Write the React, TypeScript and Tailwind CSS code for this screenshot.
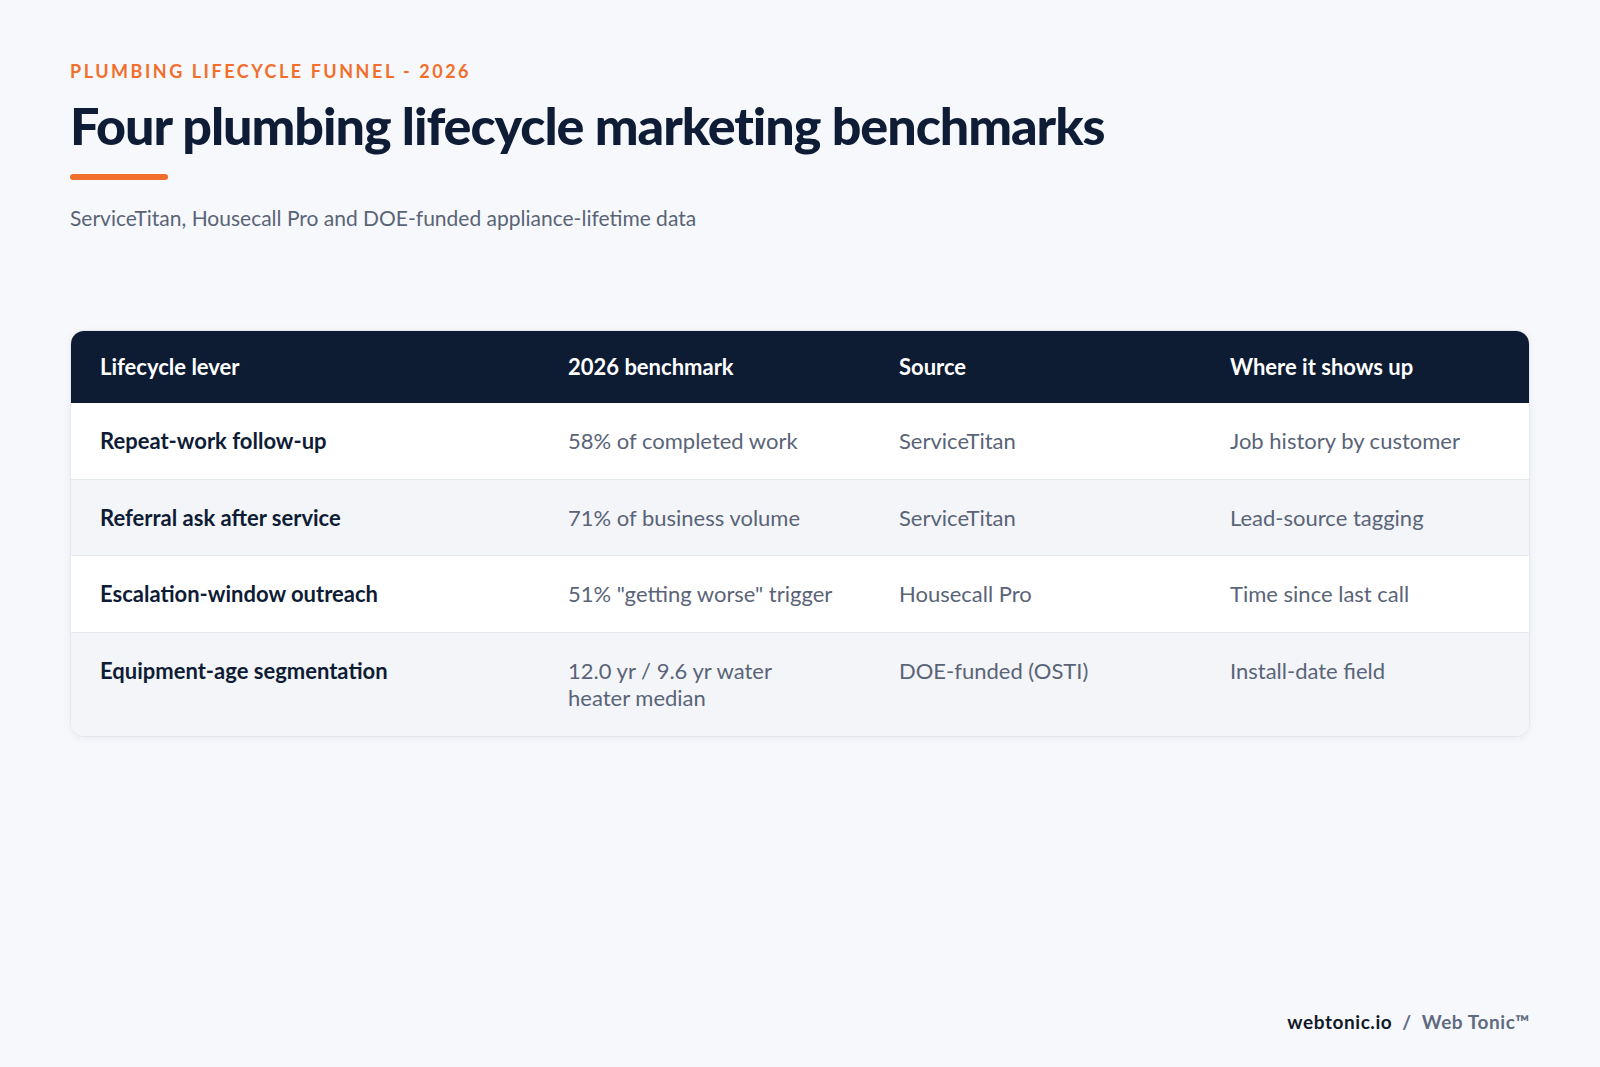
import React from "react";

const rows = [
  { lever: "Repeat-work follow-up", bench: <>58% of completed work</>, source: "ServiceTitan", where: "Job history by customer" },
  { lever: "Referral ask after service", bench: <>71% of business volume</>, source: "ServiceTitan", where: "Lead-source tagging" },
  { lever: "Escalation-window outreach", bench: <>51% "getting worse" trigger</>, source: "Housecall Pro", where: "Time since last call" },
  { lever: "Equipment-age segmentation", bench: <>12.0 yr / 9.6 yr water<br />heater median</>, source: "DOE-funded (OSTI)", where: "Install-date field" },
];

export default function App() {
  return (
    <div
      className="min-h-[1067px] w-full bg-[#f6f8fb] px-[70px] pt-[58px] flex flex-col"
      style={{ fontFamily: "Lato, 'Open Sans', sans-serif" }}
    >
      <div className="text-[18px] font-bold uppercase tracking-[0.14em] text-[#f26e2d] leading-[26px]">
        Plumbing Lifecycle Funnel - 2026
      </div>
      <h1 className="mt-[10px] text-[52px] font-black leading-[62px] tracking-[-0.02em] text-[#0f1c35]">
        Four plumbing lifecycle marketing benchmarks
      </h1>
      <div className="mt-[18px] h-[6px] w-[98px] rounded-full bg-[#f26e2d]" />
      <p className="mt-[24px] text-[21px] leading-[28px] text-[#5a6477]">
        ServiceTitan, Housecall Pro and DOE-funded appliance-lifetime data
      </p>

      <div className="mt-[98px] overflow-hidden rounded-[14px] border border-[#e3e7ee] bg-white shadow-[0_2px_8px_rgba(15,28,53,0.05)]">
        <div className="grid grid-cols-[497px_331px_331px_1fr] bg-[#0d1b33] text-[22px] font-bold leading-[28px] text-white">
          <div className="py-[22px] pl-[29px]">Lifecycle lever</div>
          <div className="py-[22px]">2026 benchmark</div>
          <div className="py-[22px]">Source</div>
          <div className="py-[22px]">Where it shows up</div>
        </div>
        {rows.map((r, i) => (
          <div
            key={i}
            className={
              "grid grid-cols-[497px_331px_331px_1fr] text-[22px] leading-[27.5px] " +
              (i % 2 === 0 ? "bg-white" : "bg-[#f3f5f9]") +
              (i > 0 ? " border-t border-[#e5e9f0]" : "")
            }
          >
            <div className="py-[24px] pl-[29px] font-bold text-[#0f1c35]">{r.lever}</div>
            <div className="py-[24px] text-[#5a6477]">{r.bench}</div>
            <div className="py-[24px] text-[#5a6477]">{r.source}</div>
            <div className="py-[24px] text-[#5a6477]">{r.where}</div>
          </div>
        ))}
      </div>

      <div className="mt-auto mb-[32px] flex justify-end text-[19px] font-bold tracking-[0.03em] leading-[26px]">
        <span className="text-[#111827]">webtonic.io</span>
        <span className="mx-[10px] text-[#5f6b7e]">/</span>
        <span className="text-[#5f6b7e]">Web Tonic™</span>
      </div>
    </div>
  );
}
